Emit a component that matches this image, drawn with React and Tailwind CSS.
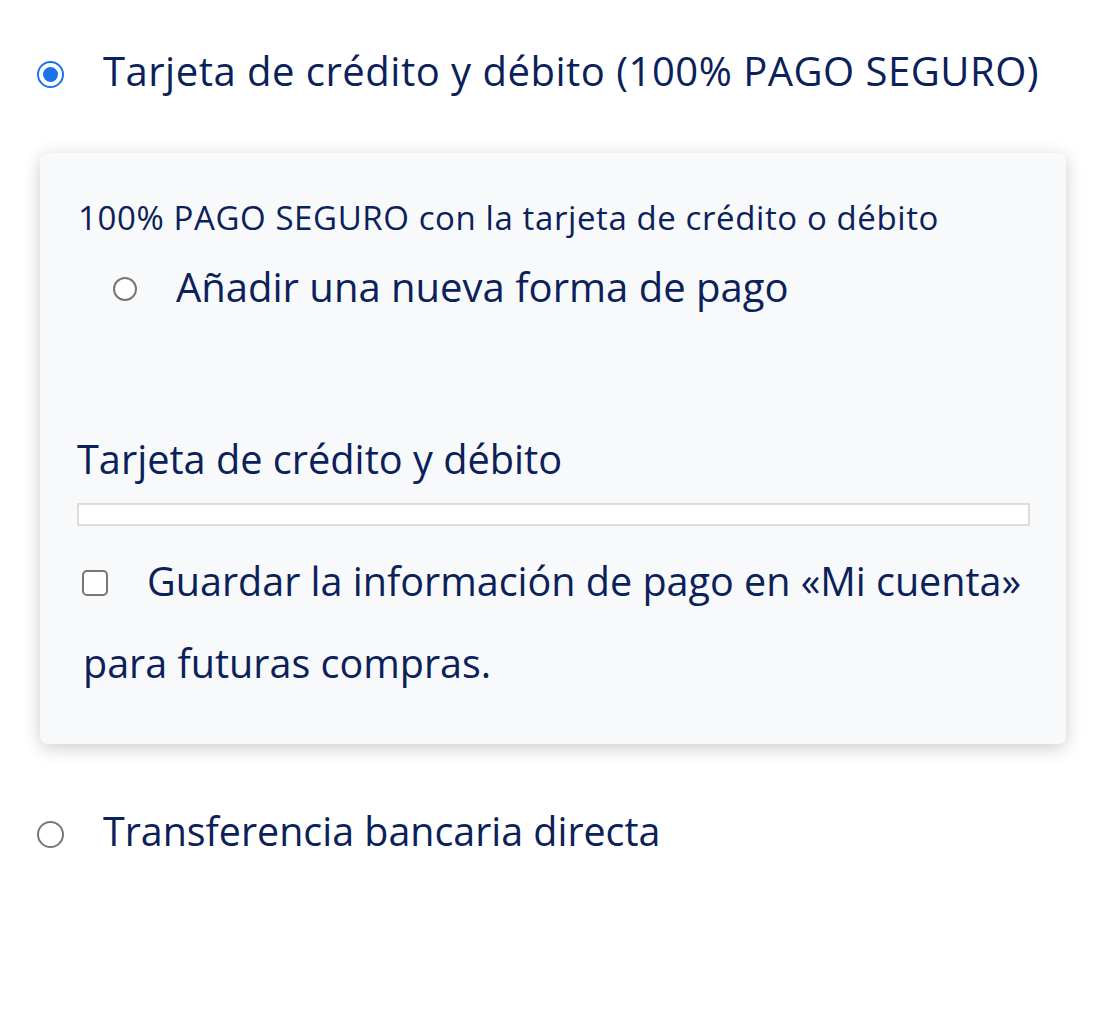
export default function App() {
  return (
    <div className="min-h-[1023px] bg-white text-[#0b2159]" style={{ fontFamily: '"Open Sans", "Noto Sans", sans-serif' }}>
      <div className="pt-[43px] px-[37px]">
        <label className="flex items-start">
          <span className="mt-[18px] w-[27px] h-[27px] rounded-full border-[2px] border-[#1a73e8] bg-white flex items-center justify-center shrink-0">
            <span className="w-[15px] h-[15px] rounded-full bg-[#1a73e8]"></span>
          </span>
          <span className="ml-[39px] text-[40px] font-medium leading-[56px] tracking-[0.5px] whitespace-nowrap">Tarjeta de crédito y débito (100% PAGO SEGURO)</span>
        </label>

        <div className="mt-[54px] ml-[3px] w-[1026px] h-[591px] bg-[#f8f9fb] rounded-[8px] shadow-[0_4px_18px_rgba(0,0,0,0.2)] pl-[38px] pr-[36px] pt-[43px]">
          <p className="text-[33px] leading-[44px] tracking-[0.6px] whitespace-nowrap">100% PAGO SEGURO con la tarjeta de crédito o débito</p>
          <label className="flex items-start mt-[19px] ml-[35px]">
            <span className="mt-[18px] w-[24px] h-[24px] rounded-full border-[2px] border-[#777] bg-white shrink-0"></span>
            <span className="ml-[39px] text-[40px] font-medium leading-[56px] whitespace-nowrap">Añadir una nueva forma de pago</span>
          </label>

          <p className="mt-[116px] -ml-[1px] text-[39.7px] font-medium leading-[56px] whitespace-nowrap">Tarjeta de crédito y débito</p>
          <div className="mt-[16px] -ml-[1px] w-[953px] h-[23px] bg-white border-[2px] border-[#dcdcdc]"></div>

          <div className="mt-[14px] ml-[4px] text-[39.5px] font-medium leading-[82px] whitespace-nowrap">
            <span className="inline-block align-baseline w-[26px] h-[26px] rounded-[5px] border-[2px] border-[#777] bg-white"></span>
            <span className="ml-[39px]">Guardar la información de pago en «Mi cuenta»</span>
            <br />
            <span className="ml-[1px]">para futuras compras.</span>
          </div>
        </div>

        <label className="flex items-start mt-[59px]">
          <span className="mt-[18px] w-[27px] h-[27px] rounded-full border-[2px] border-[#777] bg-white shrink-0"></span>
          <span className="ml-[39px] text-[39.4px] font-medium leading-[56px] whitespace-nowrap">Transferencia bancaria directa</span>
        </label>
      </div>
    </div>
  );
}
